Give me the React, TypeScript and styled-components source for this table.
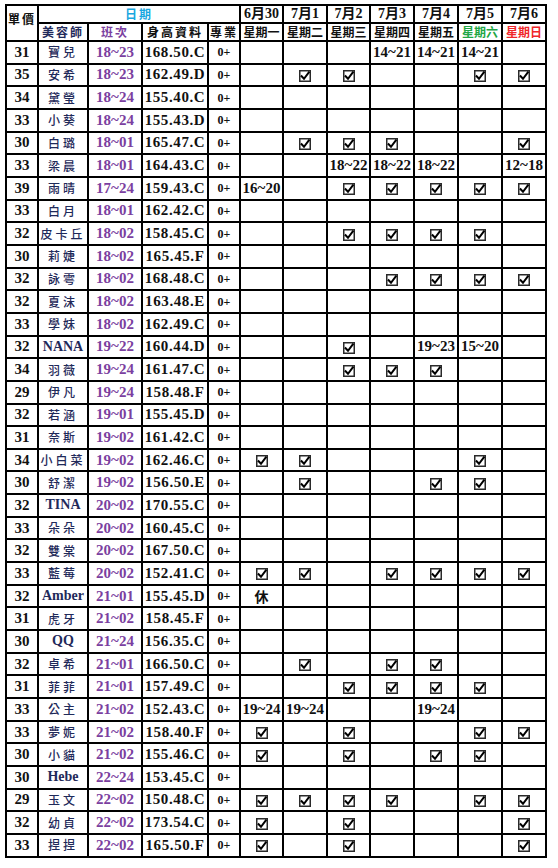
import React from 'react';
import styled, { createGlobalStyle } from 'styled-components';

type Tone = 'black' | 'navy' | 'purple' | 'cyan' | 'green' | 'red';

const TONES: Record<Tone, string> = {
  black: '#111',
  navy: '#1f2a5a',
  purple: '#7b3fa0',
  cyan: '#19a7e0',
  green: '#22a645',
  red: '#f0262a',
};

const DATES = ['6月30', '7月1', '7月2', '7月3', '7月4', '7月5', '7月6'];
const WEEKDAYS: { label: string; tone: Tone }[] = [
  { label: '星期一', tone: 'black' },
  { label: '星期二', tone: 'black' },
  { label: '星期三', tone: 'black' },
  { label: '星期四', tone: 'black' },
  { label: '星期五', tone: 'black' },
  { label: '星期六', tone: 'green' },
  { label: '星期日', tone: 'red' },
];

// v = checked, '' = empty, anything else = text
const ROWS: [string, string, string, string, string[]][] = [
  ['31', '寶兒', '18~23', '168.50.C', ['', '', '', '14~21', '14~21', '14~21', '']],
  ['35', '安希', '18~23', '162.49.D', ['', 'v', 'v', '', '', 'v', 'v']],
  ['34', '黛瑩', '18~24', '155.40.C', []],
  ['33', '小葵', '18~24', '155.43.D', []],
  ['30', '白璐', '18~01', '165.47.C', ['', 'v', 'v', 'v', '', '', 'v']],
  ['33', '梁晨', '18~01', '164.43.C', ['', '', '18~22', '18~22', '18~22', '', '12~18']],
  ['39', '雨晴', '17~24', '159.43.C', ['16~20', '', 'v', 'v', 'v', 'v', 'v']],
  ['33', '白月', '18~01', '162.42.C', []],
  ['32', '皮卡丘', '18~02', '158.45.C', ['', '', 'v', 'v', 'v', 'v', '']],
  ['30', '莉婕', '18~02', '165.45.F', []],
  ['32', '詠雩', '18~02', '168.48.C', ['', '', '', 'v', 'v', 'v', 'v']],
  ['32', '夏沫', '18~02', '163.48.E', []],
  ['33', '學妹', '18~02', '162.49.C', []],
  ['32', 'NANA', '19~22', '160.44.D', ['', '', 'v', '', '19~23', '15~20', '']],
  ['34', '羽薇', '19~24', '161.47.C', ['', '', 'v', 'v', 'v', '', '']],
  ['29', '伊凡', '19~24', '158.48.F', []],
  ['32', '若涵', '19~01', '155.45.D', []],
  ['31', '奈斯', '19~02', '161.42.C', []],
  ['34', '小白菜', '19~02', '162.46.C', ['v', 'v', '', '', '', 'v', '']],
  ['30', '舒潔', '19~02', '156.50.E', ['', 'v', '', '', 'v', 'v', '']],
  ['32', 'TINA', '20~02', '170.55.C', []],
  ['33', '朵朵', '20~02', '160.45.C', []],
  ['32', '雙棠', '20~02', '167.50.C', []],
  ['33', '藍莓', '20~02', '152.41.C', ['v', 'v', '', 'v', 'v', 'v', 'v']],
  ['32', 'Amber', '21~01', '155.45.D', ['休']],
  ['31', '虎牙', '21~02', '158.45.F', []],
  ['30', 'QQ', '21~24', '156.35.C', []],
  ['32', '卓希', '21~01', '166.50.C', ['', 'v', '', 'v', 'v', '', '']],
  ['31', '菲菲', '21~01', '157.49.C', ['', '', 'v', 'v', 'v', 'v', '']],
  ['33', '公主', '21~02', '152.43.C', ['19~24', '19~24', '', '', '19~24', '', '']],
  ['33', '夢妮', '21~02', '158.40.F', ['v', '', 'v', '', '', 'v', 'v']],
  ['30', '小貓', '21~02', '155.46.C', ['v', '', 'v', '', 'v', 'v', '']],
  ['30', 'Hebe', '22~24', '153.45.C', []],
  ['29', '玉文', '22~02', '150.48.C', ['v', 'v', 'v', 'v', '', 'v', 'v']],
  ['32', '幼貞', '22~02', '173.54.C', ['v', '', 'v', '', '', '', 'v']],
  ['33', '捏捏', '22~02', '165.50.F', ['v', '', 'v', '', '', '', 'v']],
];

const COL_WIDTHS = [32, 50, 54, 66, 32, 43, 44, 43, 44, 44, 44, 44];

function CheckMark() {
  return (
    <CheckSvg viewBox="0 0 12 12" width="12" height="12">
      <rect x="0.75" y="0.75" width="10.5" height="10.5" fill="#fff" stroke="#2a2a2a" strokeWidth="1.5" />
      <path d="M2.6 6.2 L5 8.8 L9.8 2.4" fill="none" stroke="#000" strokeWidth="2" strokeLinecap="square" />
    </CheckSvg>
  );
}

export default function App() {
  return (
    <>
      <GlobalStyle />
      <Sheet>
        <Table>
          <colgroup>
            {COL_WIDTHS.map((w, i) => (
              <col key={i} style={{ width: w }} />
            ))}
          </colgroup>
          <thead>
            <HeadRow>
              <HeadCell rowSpan={2} $align="top" $cjk>單價</HeadCell>
              <HeadCell colSpan={4} $tone="cyan" $cjk>日期</HeadCell>
              {DATES.map((d) => (
                <HeadCell key={d}>{d}</HeadCell>
              ))}
            </HeadRow>
            <HeadRow>
              <HeadCell $tone="navy" $cjk>美容師</HeadCell>
              <HeadCell $tone="purple" $cjk>班次</HeadCell>
              <HeadCell $cjk>身高資料</HeadCell>
              <HeadCell $cjk>專業</HeadCell>
              {WEEKDAYS.map((w) => (
                <DayCell key={w.label} $tone={w.tone}>{w.label}</DayCell>
              ))}
            </HeadRow>
          </thead>
          <tbody>
            {ROWS.map(([price, name, shift, info, days]) => (
              <Row key={name}>
                <Cell>{price}</Cell>
                <NameCell $latin={/^[A-Za-z]/.test(name)}>{name}</NameCell>
                <Cell $tone="purple">{shift}</Cell>
                <InfoCell>{info}</InfoCell>
                <SkillCell>0+</SkillCell>
                {DATES.map((_, i) => {
                  const v = days[i] || '';
                  return (
                    <Cell key={i} $cjk={v === '休'}>
                      {v === 'v' ? <CheckMark /> : v}
                    </Cell>
                  );
                })}
              </Row>
            ))}
          </tbody>
        </Table>
      </Sheet>
    </>
  );
}

const GlobalStyle = createGlobalStyle`
  html, body {
    margin: 0;
    padding: 0;
    background: #fff;
  }
`;

const Sheet = styled.div`
  padding: 4px 0 0 5px;
  width: 558px;
  height: 868px;
  box-sizing: border-box;
`;

const Table = styled.table`
  border-collapse: collapse;
  table-layout: fixed;
  width: 541px;
  border: 2px solid #000;
`;

const HeadRow = styled.tr`
  height: 18px;
`;

const Row = styled.tr`
  height: 22.67px;
`;

const HeadCell = styled.th<{ $tone?: Tone; $cjk?: boolean; $align?: 'top' }>`
  border: 2px solid #000;
  padding: 0;
  text-align: center;
  vertical-align: ${(p) => (p.$align === 'top' ? 'top' : 'middle')};
  padding-top: ${(p) => (p.$align === 'top' ? '7px' : '0')};
  color: ${(p) => TONES[p.$tone || 'black']};
  font-family: ${(p) =>
    p.$cjk
      ? '"Noto Sans CJK TC", sans-serif'
      : '"Liberation Serif", "Noto Sans CJK TC", serif'};
  font-weight: 700;
  font-size: ${(p) => (p.$cjk ? '12px' : '14px')};
  letter-spacing: ${(p) => (p.$cjk ? '2px' : '0')};
  white-space: nowrap;
  overflow: hidden;
  line-height: 1;
`;

const DayCell = styled(HeadCell)`
  font-family: "Noto Sans CJK TC", sans-serif;
  font-size: 12px;
  font-weight: 600;
  letter-spacing: 0;
`;

const Cell = styled.td<{ $tone?: Tone; $cjk?: boolean }>`
  border: 2px solid #000;
  padding: 0;
  text-align: center;
  vertical-align: middle;
  color: ${(p) => TONES[p.$tone || 'black']};
  font-family: ${(p) =>
    p.$cjk
      ? '"Noto Sans CJK TC", sans-serif'
      : '"Liberation Serif", "Noto Sans CJK TC", serif'};
  font-weight: 700;
  font-size: ${(p) => (p.$cjk ? '14px' : '15px')};
  white-space: nowrap;
  overflow: hidden;
  line-height: 1;
`;

const NameCell = styled(Cell)<{ $latin?: boolean }>`
  color: ${TONES.navy};
  font-family: ${(p) =>
    p.$latin
      ? '"Liberation Serif", serif'
      : '"Noto Sans CJK TC", sans-serif'};
  font-weight: ${(p) => (p.$latin ? 700 : 500)};
  font-size: ${(p) => (p.$latin ? '14px' : '12px')};
  letter-spacing: ${(p) => (p.$latin ? '0' : '3px')};
`;

const InfoCell = styled(Cell)`
  letter-spacing: 0.6px;
`;

const SkillCell = styled(Cell)`
  font-size: 12px;
`;

const CheckSvg = styled.svg`
  display: inline-block;
  vertical-align: middle;
`;
